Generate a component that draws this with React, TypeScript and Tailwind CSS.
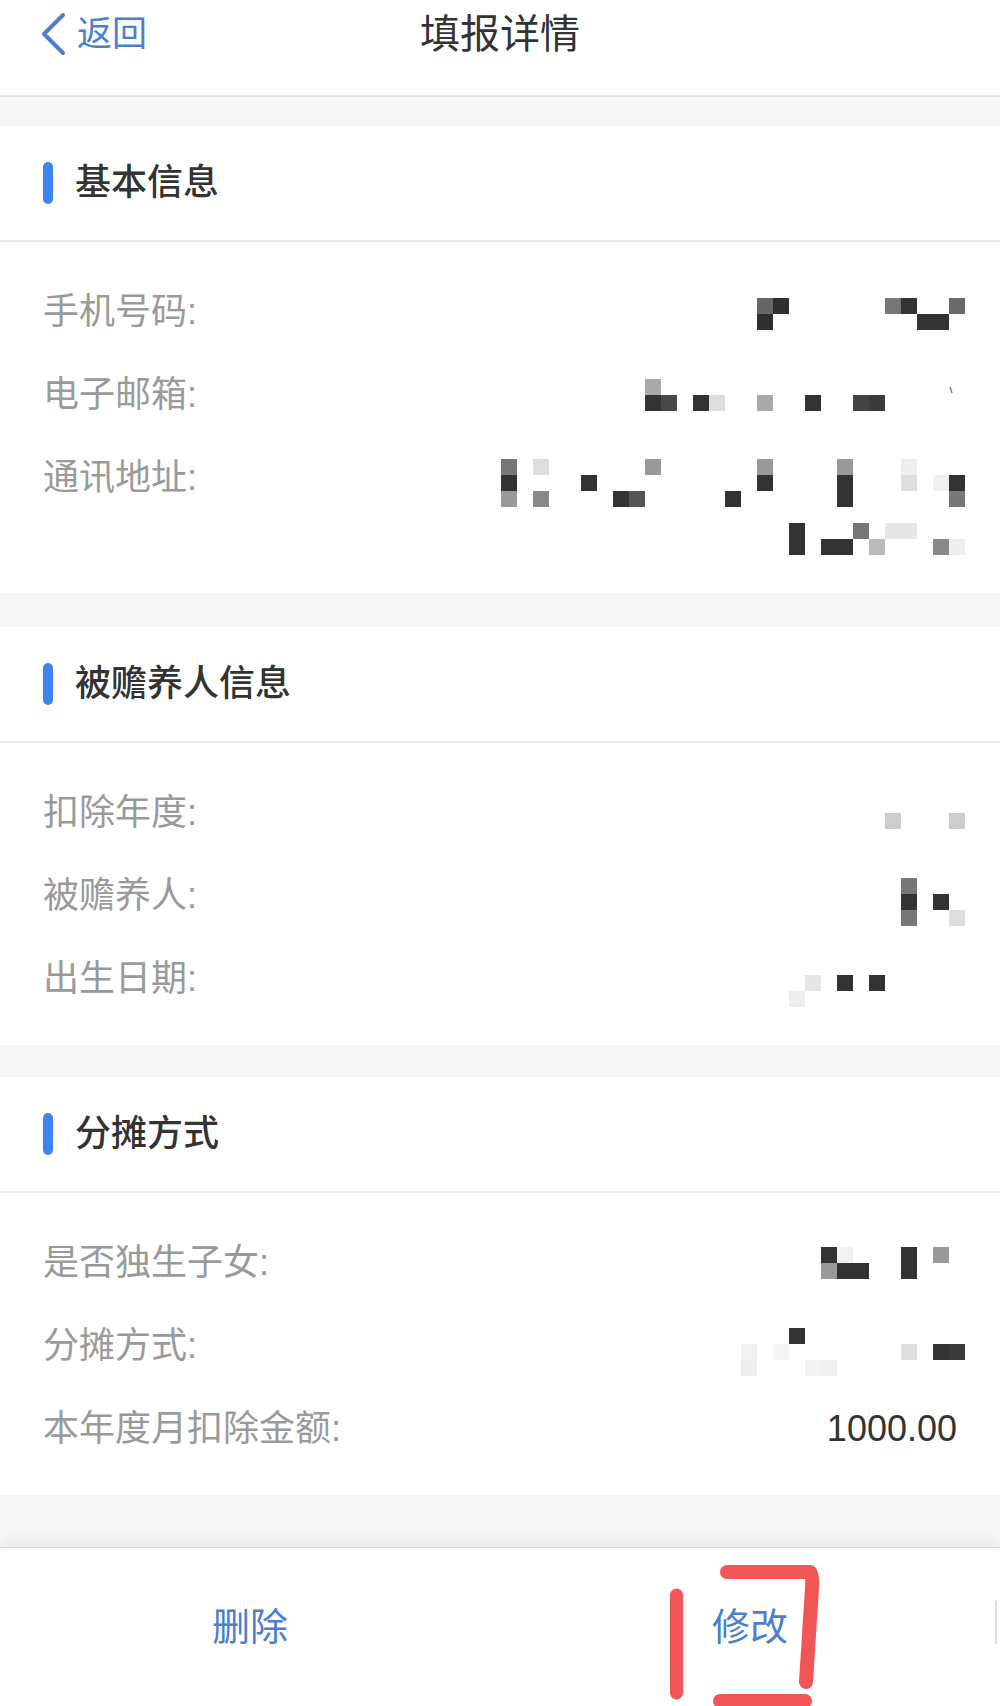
type Cell = [number, number, string];

const font = "font-['Liberation_Sans','Noto_Sans_CJK_SC',sans-serif]";

// redacted values are drawn as 16px mosaic cells, columns counted from x=645
function Mosaic({ cells, top, height = 40, extra }: { cells: Cell[]; top: number; height?: number; extra?: React.ReactNode }) {
  return (
    <svg width={500} height={height} viewBox={`0 0 500 ${height}`} className="-mr-[9px] shrink-0 overflow-visible">
      {cells.map(([col, row, color], i) => (
        <rect key={i} x={179 + 16 * col} y={top + 16 * row} width={16} height={16} fill={color} />
      ))}
      {extra}
    </svg>
  );
}

function Row({ label, children }: { label: string; children: React.ReactNode }) {
  return (
    <div className="flex items-start justify-between">
      <span className="whitespace-nowrap text-[36px] leading-[40px] text-[#9a9a9a]">{label}</span>
      {children}
    </div>
  );
}

function Section({ title, className, bodyClass, children }: { title: string; className: string; bodyClass: string; children: React.ReactNode }) {
  return (
    <section className={`bg-white ${className}`}>
      <div className="flex h-[116px] items-center border-b-2 border-[#e6e7ea] pl-[43px]">
        <div className="h-[42px] w-[10px] rounded-full bg-[#3d86f2]" />
        <h2 className="ml-[22px] text-[36px] font-medium leading-[40px] text-[#333]">{title}</h2>
      </div>
      <div className={`flex flex-col gap-[43px] px-[43px] pt-[50px] ${bodyClass}`}>{children}</div>
    </section>
  );
}

export default function App() {
  return (
    <div className={`relative w-[1000px] h-[1706px] overflow-hidden bg-[#f5f6f8] ${font}`}>
      <header className="h-[97px] border-b-2 border-[#e3e4e6] bg-white">
        <div className="grid h-[68px] grid-cols-[1fr_auto_1fr] items-center">
          <button className="flex items-center pl-[41px] text-[#4a7fd0]">
            <svg width="26" height="44" viewBox="0 0 26 44" fill="none">
              <polyline points="22,3 3,22 22,41" stroke="#4a7fd0" strokeWidth="4" strokeLinecap="round" strokeLinejoin="round" />
            </svg>
            <span className="ml-[10px] text-[35px] leading-[40px]">返回</span>
          </button>
          <h1 className="text-[40px] leading-[44px] text-[#333]">填报详情</h1>
          <div />
        </div>
      </header>

      <Section title="基本信息" className="mt-[29px]" bodyClass="pb-[37px]">
        <Row label="手机号码:">
          <Mosaic
            top={6}
            cells={[
              [7, 0, '#666'], [8, 0, '#2f2f2f'], [15, 0, '#767676'], [16, 0, '#333'], [19, 0, '#6a6a6a'],
              [7, 1, '#2f2f2f'], [17, 1, '#333'], [18, 1, '#333'],
            ]}
          />
        </Row>
        <Row label="电子邮箱:">
          <Mosaic
            top={4}
            cells={[
              [0, 0, '#aaa'],
              [0, 1, '#333'], [1, 1, '#484848'], [3, 1, '#333'], [4, 1, '#ddd'], [7, 1, '#aaa'],
              [10, 1, '#333'], [13, 1, '#444'], [14, 1, '#3a3a3a'],
            ]}
            extra={<line x1="484" y1="12" x2="486" y2="18" stroke="#888" strokeWidth="1.5" />}
          />
        </Row>
        <Row label="通讯地址:">
          <Mosaic
            top={1}
            height={98}
            cells={[
              [-9, 0, '#777'], [-7, 0, '#ddd'], [0, 0, '#999'], [7, 0, '#999'], [12, 0, '#999'], [16, 0, '#eee'],
              [-9, 1, '#333'], [-4, 1, '#333'], [7, 1, '#333'], [12, 1, '#333'], [16, 1, '#ddd'], [18, 1, '#f0f0f0'], [19, 1, '#333'],
              [-9, 2, '#999'], [-7, 2, '#888'], [-2, 2, '#333'], [-1, 2, '#555'], [5, 2, '#333'], [12, 2, '#333'], [19, 2, '#777'],
              [9, 4, '#333'], [13, 4, '#777'], [15, 4, '#e6e6e6'], [16, 4, '#e6e6e6'],
              [9, 5, '#333'], [11, 5, '#333'], [12, 5, '#333'], [14, 5, '#bbb'], [18, 5, '#888'], [19, 5, '#eee'],
            ]}
          />
        </Row>
      </Section>

      <Section title="被赡养人信息" className="mt-[34px]" bodyClass="pb-[46px]">
        <Row label="扣除年度:">
          <Mosaic top={20} cells={[[15, 0, '#ccc'], [19, 0, '#ccc']]} />
        </Row>
        <Row label="被赡养人:">
          <Mosaic
            top={2}
            cells={[
              [16, 0, '#777'],
              [16, 1, '#333'], [18, 1, '#333'],
              [16, 2, '#777'], [19, 2, '#ddd'],
            ]}
          />
        </Row>
        <Row label="出生日期:">
          <Mosaic
            top={16}
            cells={[
              [10, 0, '#e6e6e6'], [12, 0, '#333'], [14, 0, '#333'],
              [9, 1, '#eee'],
            ]}
          />
        </Row>
      </Section>

      <Section title="分摊方式" className="mt-[32px]" bodyClass="pb-[46px]">
        <Row label="是否独生子女:">
          <Mosaic
            top={4}
            cells={[
              [11, 0, '#333'], [12, 0, '#f2f2f2'], [16, 0, '#333'], [18, 0, '#999'],
              [11, 1, '#999'], [12, 1, '#333'], [13, 1, '#333'], [16, 1, '#333'],
            ]}
          />
        </Row>
        <Row label="分摊方式:">
          <Mosaic
            top={2}
            cells={[
              [9, 0, '#333'],
              [6, 1, '#f2f2f2'], [8, 1, '#f5f5f5'], [16, 1, '#ddd'], [18, 1, '#333'], [19, 1, '#3a3a3a'],
              [6, 2, '#eee'], [10, 2, '#f3f3f3'], [11, 2, '#f0f0f0'],
            ]}
          />
        </Row>
        <Row label="本年度月扣除金额:">
          <span className="text-[36px] leading-[40px] text-[#333]">1000.00</span>
        </Row>
      </Section>

      <footer className="relative mt-[52px] grid h-[159px] grid-cols-2 items-center border-t border-[#dcdcdc] bg-white shadow-[0_-6px_14px_rgba(0,0,0,0.05)]">
        <button className="text-center text-[38px] leading-[44px] text-[#4a7fd0]">删除</button>
        <button className="text-center text-[38px] leading-[44px] text-[#4a7fd0]">修改</button>
        <svg className="pointer-events-none absolute inset-0" width="1000" height="159" viewBox="0 0 1000 159" fill="none">
          <g stroke="#f25555" strokeLinecap="round" strokeLinejoin="round">
            <line x1="676.5" y1="47" x2="676.5" y2="145" strokeWidth="13" />
            <path d="M727 24 L810 24 Q813 26 812 40 L806 134" strokeWidth="14" />
            <line x1="720" y1="153" x2="805" y2="153" strokeWidth="14" />
          </g>
          <line x1="996" y1="53" x2="996" y2="96" stroke="#ddd" strokeWidth="2" />
        </svg>
      </footer>
    </div>
  );
}
